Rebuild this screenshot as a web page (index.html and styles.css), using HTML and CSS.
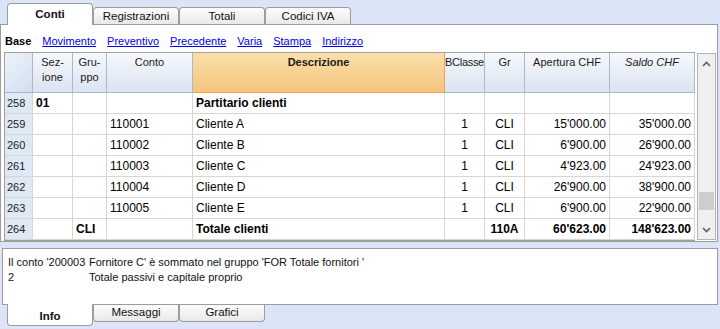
FILE: index.html
```html
<!DOCTYPE html>
<html lang="it">
<head>
  <meta charset="UTF-8">
  <title>Conti</title>
  <link rel="stylesheet" href="styles.css">
</head>
<body>
  <div class="tabs tabs-top">
    <div class="tab active">Conti</div>
    <div class="tab">Registrazioni</div>
    <div class="tab">Totali</div>
    <div class="tab">Codici IVA</div>
  </div>

  <div class="panel">
    <div class="toolbar">
      <b>Base</b>
      <a href="#">Movimento</a>
      <a href="#">Preventivo</a>
      <a href="#">Precedente</a>
      <a href="#">Varia</a>
      <a href="#">Stampa</a>
      <a href="#">Indirizzo</a>
    </div>

    <div class="grid-area">
      <div class="grid">
        <div class="row head">
          <div class="c corner"></div>
          <div class="c">Sez-<br>ione</div>
          <div class="c">Gru-<br>ppo</div>
          <div class="c">Conto</div>
          <div class="c sel">Descrizione</div>
          <div class="c tight">BClasse</div>
          <div class="c">Gr</div>
          <div class="c">Apertura CHF</div>
          <div class="c it">Saldo CHF</div>
        </div>
        <div class="row">
          <div class="c rh">258</div>
          <div class="c b">01</div>
          <div class="c"></div>
          <div class="c"></div>
          <div class="c b">Partitario clienti</div>
          <div class="c"></div>
          <div class="c"></div>
          <div class="c"></div>
          <div class="c"></div>
        </div>
        <div class="row">
          <div class="c rh">259</div>
          <div class="c"></div>
          <div class="c"></div>
          <div class="c">110001</div>
          <div class="c">Cliente A</div>
          <div class="c ctr">1</div>
          <div class="c ctr">CLI</div>
          <div class="c num">15'000.00</div>
          <div class="c num">35'000.00</div>
        </div>
        <div class="row">
          <div class="c rh">260</div>
          <div class="c"></div>
          <div class="c"></div>
          <div class="c">110002</div>
          <div class="c">Cliente B</div>
          <div class="c ctr">1</div>
          <div class="c ctr">CLI</div>
          <div class="c num">6'900.00</div>
          <div class="c num">26'900.00</div>
        </div>
        <div class="row">
          <div class="c rh">261</div>
          <div class="c"></div>
          <div class="c"></div>
          <div class="c">110003</div>
          <div class="c">Cliente C</div>
          <div class="c ctr">1</div>
          <div class="c ctr">CLI</div>
          <div class="c num">4'923.00</div>
          <div class="c num">24'923.00</div>
        </div>
        <div class="row">
          <div class="c rh">262</div>
          <div class="c"></div>
          <div class="c"></div>
          <div class="c">110004</div>
          <div class="c">Cliente D</div>
          <div class="c ctr">1</div>
          <div class="c ctr">CLI</div>
          <div class="c num">26'900.00</div>
          <div class="c num">38'900.00</div>
        </div>
        <div class="row">
          <div class="c rh">263</div>
          <div class="c"></div>
          <div class="c"></div>
          <div class="c">110005</div>
          <div class="c">Cliente E</div>
          <div class="c ctr">1</div>
          <div class="c ctr">CLI</div>
          <div class="c num">6'900.00</div>
          <div class="c num">22'900.00</div>
        </div>
        <div class="row">
          <div class="c rh">264</div>
          <div class="c"></div>
          <div class="c b">CLI</div>
          <div class="c"></div>
          <div class="c b">Totale clienti</div>
          <div class="c"></div>
          <div class="c ctr b">110A</div>
          <div class="c num b">60'623.00</div>
          <div class="c num b">148'623.00</div>
        </div>
      </div>

      <div class="scrollbar">
        <div class="sb-btn">
          <svg width="9" height="6" viewBox="0 0 9 6"><polyline points="1,5 4.5,1.5 8,5" fill="none" stroke="#606060" stroke-width="1.6"/></svg>
        </div>
        <div class="sb-track"></div>
        <div class="sb-thumb"></div>
        <div class="sb-gap"></div>
        <div class="sb-btn down">
          <svg width="9" height="6" viewBox="0 0 9 6"><polyline points="1,1 4.5,4.5 8,1" fill="none" stroke="#606060" stroke-width="1.6"/></svg>
        </div>
      </div>
    </div>
  </div>

  <div class="info">
    <div class="msg">
      <span>Il conto '200003</span><span>Fornitore C' è sommato nel gruppo 'FOR Totale fornitori '</span>
      <span>2</span><span>Totale passivi e capitale proprio</span>
    </div>
  </div>

  <div class="tabs tabs-bottom">
    <div class="tab active">Info</div>
    <div class="tab">Messaggi</div>
    <div class="tab">Grafici</div>
  </div>
</body>
</html>
```

FILE: styles.css
```css
body {
  margin: 0;
  width: 720px;
  height: 329px;
  overflow: hidden;
  background-color: #dbe5f7;
  font-family: "Liberation Sans", Arial, sans-serif;
  font-size: 11px;
  color: #000;
}

/* onglets */
.tabs {
  display: flex;
  padding-left: 7px;
}

.tabs-top {
  height: 24px;
  align-items: flex-end;
}

.tabs-bottom {
  align-items: flex-start;
}

.tab {
  box-sizing: border-box;
  width: 86px;
  height: 17px;
  border: 1px solid #9c9c9c;
  background: linear-gradient(#fdfdfd, #e8e8e8);
  text-align: center;
  font-size: 11.5px;
  color: #111;
}

.tabs-top .tab {
  border-bottom: none;
  border-radius: 4px 4px 0 0;
  line-height: 16px;
}

.tabs-bottom .tab {
  border-top: none;
  border-radius: 0 0 4px 4px;
  line-height: 15px;
}

.tab.active {
  height: 22px;
  background: #fff;
  font-weight: bold;
  position: relative;
  z-index: 1;
}

.tabs-top .tab.active {
  margin-bottom: -1px;
  line-height: 21px;
}

.tabs-bottom .tab.active {
  margin-top: -1px;
  line-height: 24px;
}

/* panneau principal */
.panel {
  box-sizing: border-box;
  width: 718px;
  height: 218px;
  background: #fff;
  border: 1px solid #9c9c9c;
}

.toolbar {
  box-sizing: border-box;
  height: 27px;
  padding: 10px 0 0 4px;
  line-height: 13px;
  display: flex;
  gap: 11px;
}

.toolbar a {
  color: #0000ee;
}

.grid-area {
  display: flex;
  margin-left: 3px;
}

.grid {
  border-left: 1px solid #a0a0a0;
  border-top: 1px solid #a0a0a0;
  border-bottom: 1px solid #a0a0a0;
}

.row {
  display: grid;
  grid-template-columns: 28px 40px 34px 86px 252px 40px 40px 85px 85px;
  height: 21px;
}

.c {
  box-sizing: border-box;
  border-right: 1px solid #d6d6d6;
  border-bottom: 1px solid #d6d6d6;
  padding: 0 3px;
  font-size: 12px;
  line-height: 20px;
  white-space: nowrap;
  overflow: hidden;
}

.c.rh {
  background: #dfe8f5;
  font-size: 11px;
  padding: 0 2px;
  color: #222;
}

.b { font-weight: bold; }
.ctr { text-align: center; }
.num { text-align: right; }

/* en-tete */
.row.head {
  height: 40px;
}

.head .c {
  background: linear-gradient(#f6f8fc, #dbe4f1);
  border-right-color: #a6b9d2;
  border-bottom-color: #a6b9d2;
  text-align: center;
  font-size: 11px;
  line-height: 15px;
  padding: 2px 0 0;
  color: #1a1a1a;
}

.head .c.corner {
  background: linear-gradient(135deg, #eef3fa, #d2deee);
}

.head .c.sel {
  background: linear-gradient(#fadfa9, #f5c47d);
  border-right-color: #efa24a;
  border-bottom-color: #efa24a;
  font-weight: bold;
}

.head .c.tight {
  letter-spacing: -0.3px;
}

.head .c.it {
  font-style: italic;
}

/* barre de defilement */
.scrollbar {
  width: 19px;
  box-sizing: border-box;
  margin: 1px 0 1px 2px;
  border: 1px solid #b4b4b4;
  background: #f0f0f0;
  display: flex;
  flex-direction: column;
}

.sb-btn {
  height: 20px;
  display: flex;
  justify-content: center;
  align-items: center;
}

.sb-btn.down {
  height: 18px;
}

.sb-track {
  flex: 1;
}

.sb-thumb {
  height: 18px;
  margin: 0 1px;
  background: #cdcdcd;
}

.sb-gap {
  height: 11px;
}

/* zone info */
.info {
  box-sizing: border-box;
  height: 57px;
  margin: 6px 2px 0 2px;
  background: #fff;
  border: 1px solid #9c9c9c;
}

.msg {
  display: grid;
  grid-template-columns: 81px auto;
  padding: 6px 0 0 5px;
  font-size: 11px;
  line-height: 15px;
  color: #111;
}
```
